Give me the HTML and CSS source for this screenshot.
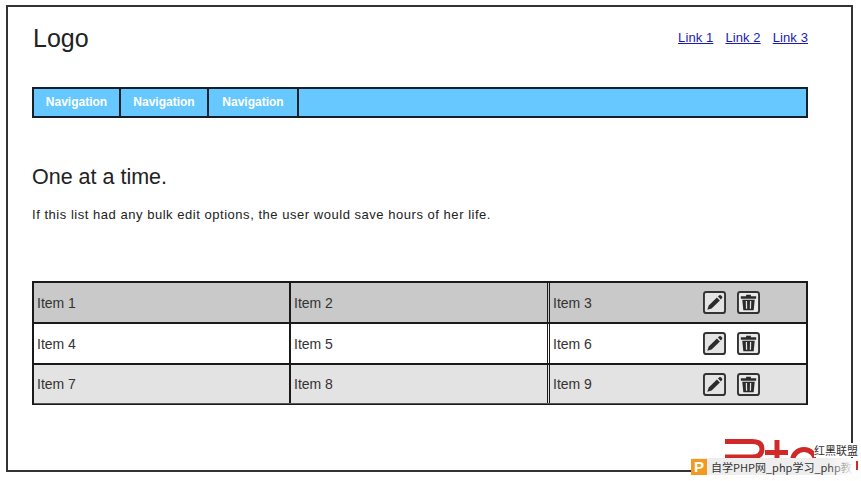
FILE: index.html
```html
<!DOCTYPE html>
<html lang="en">
<head>
<meta charset="utf-8">
<title>One at a time</title>
<link rel="stylesheet" href="styles.css">
</head>
<body>
<div class="page">
  <header class="top">
    <div class="logo">Logo</div>
    <div class="links"><a href="#">Link 1</a><a href="#">Link 2</a><a href="#">Link 3</a></div>
  </header>
  <nav class="nav">
    <a class="nav-item" href="#">Navigation</a>
    <a class="nav-item" href="#">Navigation</a>
    <a class="nav-item" href="#">Navigation</a>
  </nav>
  <h1 class="title">One at a time.</h1>
  <p class="lead">If this list had any bulk edit options, the user would save hours of her life.</p>
  <div class="list">
    <div class="row row-a">
      <div class="cell">Item 1</div><div class="cell cell-mid">Item 2</div>
      <div class="cell cell-last"><span>Item 3</span>
        <span class="actions">
          <svg class="btn" viewBox="0 0 24 24"><use href="#pen"/></svg>
          <svg class="btn" viewBox="0 0 24 24"><use href="#trash"/></svg>
        </span></div>
    </div>
    <div class="row row-b">
      <div class="cell">Item 4</div><div class="cell cell-mid">Item 5</div>
      <div class="cell cell-last"><span>Item 6</span>
        <span class="actions">
          <svg class="btn" viewBox="0 0 24 24"><use href="#pen"/></svg>
          <svg class="btn" viewBox="0 0 24 24"><use href="#trash"/></svg>
        </span></div>
    </div>
    <div class="row row-c">
      <div class="cell">Item 7</div><div class="cell cell-mid">Item 8</div>
      <div class="cell cell-last"><span>Item 9</span>
        <span class="actions">
          <svg class="btn" viewBox="0 0 24 24"><use href="#pen"/></svg>
          <svg class="btn" viewBox="0 0 24 24"><use href="#trash"/></svg>
        </span></div>
    </div>
  </div>
</div>

<div class="mark-logo">
  <svg class="mark-svg" viewBox="0 0 92 24" width="92" height="24">
    <path d="M1 5.5 H28 Q38 5.5 38 13 Q38 21 28 21 H1" fill="none" stroke="#cf2a27" stroke-width="5"/>
    <path d="M41 16.5 H64 M53 4 V24" fill="none" stroke="#cf2a27" stroke-width="5"/>
    <circle cx="80" cy="25" r="11.5" fill="none" stroke="#cf2a27" stroke-width="5"/>
  </svg>
  <span class="mark-name">红黑联盟</span>
</div>
<div class="mark-bar"><span class="mark-p">P</span><span class="mark-text">自学PHP网_php学习_php教</span></div>
<div class="mark-sliver"></div>

<svg class="defs" width="0" height="0" aria-hidden="true">
  <defs>
    <g id="pen">
      <rect x="1" y="1" width="22" height="22" rx="2.5" fill="#e4e4e4" stroke="#333" stroke-width="2"/>
      <path d="M4.5 19.5 L6 15 L14.5 6.8 L17.6 9.9 L9 18.2 Z" fill="#2b2b2b"/>
      <path d="M15.6 5.7 L17 4.4 Q17.8 3.8 18.6 4.5 L19.9 5.8 Q20.5 6.6 19.9 7.4 L18.6 8.8 Z" fill="#2b2b2b"/>
    </g>
    <g id="trash">
      <rect x="1" y="1" width="22" height="22" rx="2.5" fill="#eaeaea" stroke="#333" stroke-width="2"/>
      <path d="M4 5.5 H9.5 V4 H14.5 V5.5 H20 V8 H4 Z" fill="#2b2b2b"/>
      <path d="M5.5 9 H18.5 L17.4 20 H6.6 Z" fill="#2b2b2b"/>
      <path d="M9.8 10.5 L10 18.5 M14.2 10.5 L14 18.5" stroke="#e4e4e4" stroke-width="1.3"/>
    </g>
  </defs>
</svg>
</body>
</html>
```
FILE: styles.css
```css
* { box-sizing: border-box; }
html, body { margin: 0; padding: 0; background: #fff; }
body {
  width: 861px;
  height: 481px;
  overflow: hidden;
  position: relative;
  font-family: "Liberation Sans", Arial, sans-serif;
  color: #222;
}
.page {
  width: 847px;
  height: 467px;
  margin: 5px 0 0 6px;
  border: 2px solid #333;
  padding: 0 43px 0 24px;
}
.top {
  display: flex;
  justify-content: space-between;
  align-items: flex-start;
  height: 80px;
  padding-top: 16px;
}
.logo { font-size: 25px; line-height: 30px; color: #222; padding-left: 1px; }
.links { display: flex; gap: 12px; font-size: 13px; line-height: 16px; letter-spacing: 0.1px; padding-top: 7px; }
.links a { color: #1a1ab0; text-decoration: underline; }
.nav {
  display: flex;
  width: 776px;
  height: 31px;
  background: #66c8ff;
  border: 2px solid #14202a;
}
.nav-item {
  width: 88px;
  border-right: 2px solid #14202a;
  color: #fff;
  font-size: 12px;
  font-weight: bold;
  line-height: 27px;
  text-align: center;
  text-decoration: none;
}
.nav-item:first-child { width: 87px; }
.nav-item:last-child { width: 90px; }
.title { margin: 46px 0 0; font-size: 21.5px; font-weight: normal; line-height: 26px; color: #222; }
.lead { margin: 17px 0 0; font-size: 13px; line-height: 16px; letter-spacing: 0.53px; color: #222; }
.list { width: 776px; margin-top: 58px; border: 2px solid #1a1a1a; border-bottom-width: 1px; }
.row { display: grid; grid-template-columns: 257px 259px 1fr; height: 41px; border-bottom: 2px solid #1a1a1a; }
.row:last-child { height: 39px; border-bottom: 1px solid #555; }
.row-a { background: #c9c9c9; }
.row-b { background: #fff; }
.row-c { background: #e3e3e3; }
.cell {
  display: flex;
  align-items: center;
  padding-left: 3px;
  font-size: 14px;
  color: #333;
  border-right: 2px solid #1a1a1a;
}
.cell-mid { border-right: 3px double #1a1a1a; }
.cell-last { border-right: 0; justify-content: space-between; padding-right: 46px; }
.actions { display: flex; gap: 11px; }
.btn { width: 23px; height: 23px; display: block; }
.defs { position: absolute; }
.mark-logo { position: absolute; left: 724px; top: 436px; }
.mark-svg { display: block; }
.mark-name {
  position: absolute;
  left: 90px;
  top: 7px;
  width: 47px;
  background: #fff;
  font: 11px/14px "Noto Sans CJK SC", sans-serif;
  color: #333;
  white-space: nowrap;
}
.mark-bar {
  position: absolute;
  left: 691px;
  top: 458px;
  width: 164px;
  height: 17px;
  display: flex;
  align-items: center;
  background: #eeeeee;
  white-space: nowrap;
}
.mark-bar::after {
  content: "";
  position: absolute;
  right: 0;
  top: 0;
  bottom: 0;
  width: 28px;
  background: linear-gradient(to right, rgba(255, 255, 255, 0), #fff);
}
.mark-p {
  width: 16px;
  height: 16px;
  flex: none;
  background: #f39a1e;
  color: #fff;
  font: bold 15px/16px "Liberation Sans", sans-serif;
  text-align: center;
}
.mark-text { margin-left: 4px; font: 11px/16px "Noto Sans CJK SC", sans-serif; color: #333; }
.mark-sliver {
  position: absolute;
  left: 856px;
  top: 461px;
  width: 2px;
  height: 9px;
  background: #cf2a27;
}
```
